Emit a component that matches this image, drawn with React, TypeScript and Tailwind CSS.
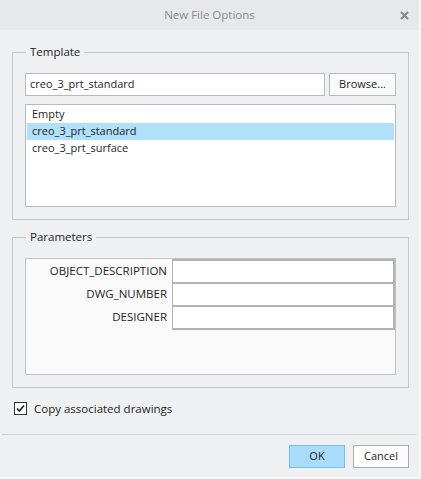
import React from "react";

const font = { fontFamily: '"Open Sans", "Noto Sans", sans-serif' };

export default function App() {
  return (
    <div className="w-[421px] h-[479px] bg-[#f6f6f7]" style={font}>
      <div className="w-[419px] h-[477px] bg-[#eff0f2] flex flex-col text-[11px] text-[#1f1f1f]">
        {/* Title bar */}
        <div className="h-[30px] bg-[#e7e8ea] grid grid-cols-[1fr_auto_1fr] items-center">
          <div />
          <div className="text-[11.5px] text-[#8c8c8c]">New File Options</div>
          <div className="flex justify-end pr-[10px]">
            <svg width="9" height="9" viewBox="0 0 9 9">
              <path d="M1 1 L8 8 M8 1 L1 8" stroke="#8a8a8a" strokeWidth="2.2" strokeLinecap="butt" />
            </svg>
          </div>
        </div>

        <div className="pl-[12px] pr-[10px]">
          {/* Template group */}
          <fieldset className="mt-[14px] border border-[#c8c9cb] px-[12px] pt-[13px] pb-[12px] min-w-0">
            <legend className="ml-[1px] px-[4px] leading-[16px] text-[11.5px]">Template</legend>
            <div className="flex gap-[4px]">
              <div className="flex-1 h-[23px] bg-white border border-[#b9b9b9] flex items-center pl-[4px]">
                creo_3_prt_standard
              </div>
              <div className="w-[67px] h-[23px] bg-[#fafafa] border border-[#b9b9b9] flex items-center justify-center">
                Browse...
              </div>
            </div>
            <div className="mt-[8px] h-[103px] bg-white border border-[#b9b9b9] p-[1px]">
              <div className="h-[17px] flex items-center pl-[5px]">Empty</div>
              <div className="h-[17px] flex items-center pl-[5px] bg-[#b0e0fa]">creo_3_prt_standard</div>
              <div className="h-[17px] flex items-center pl-[5px]">creo_3_prt_surface</div>
            </div>
          </fieldset>

          {/* Parameters group */}
          <fieldset className="mt-[9px] border border-[#c8c9cb] px-[12px] pt-[13px] pb-[12px] min-w-0">
            <legend className="ml-[1px] px-[4px] leading-[16px] text-[11.5px]">Parameters</legend>
            <div className="h-[117px] bg-[#fafafa] border border-[#c2c2c2]">
              {["OBJECT_DESCRIPTION", "DWG_NUMBER", "DESIGNER"].map((label, i) => (
                <div key={label} className="grid grid-cols-[146px_1fr]">
                  <div className="h-[23px] flex items-center justify-end pr-[5px] text-[11.5px]">{label}</div>
                  <div
                    className={
                      i === 2
                        ? "h-[25px] bg-white border-l border-t-2 border-r-2 border-b-2 border-[#b3b3b3]"
                        : "h-[23px] bg-white border-l border-t-2 border-r-2 border-[#b3b3b3]"
                    }
                  />
                </div>
              ))}
            </div>
          </fieldset>

          {/* Checkbox */}
          <div className="mt-[14px] flex items-center pl-[2px]">
            <div className="w-[13px] h-[13px] bg-white border border-[#333333] flex items-center justify-center">
              <svg width="11" height="11" viewBox="0 0 11 11">
                <path d="M2 5.5 L4.3 8 L9 2.5" fill="none" stroke="#222222" strokeWidth="1.6" />
              </svg>
            </div>
            <div className="ml-[7px] text-[11.5px] leading-[13px]">Copy associated drawings</div>
          </div>
        </div>

        {/* Separator */}
        <div className="mt-[19px] mx-[2px] h-[1px] bg-[#cfd0d2]" />

        {/* Buttons */}
        <div className="mt-[10px] flex justify-end gap-[8px] pr-[10px]">
          <div className="w-[56px] h-[23px] bg-[#a9dcfb] border border-[#6fc3f4] flex items-center justify-center">
            OK
          </div>
          <div className="w-[56px] h-[23px] bg-[#fcfcfc] border border-[#adadad] flex items-center justify-center">
            Cancel
          </div>
        </div>
      </div>
    </div>
  );
}
